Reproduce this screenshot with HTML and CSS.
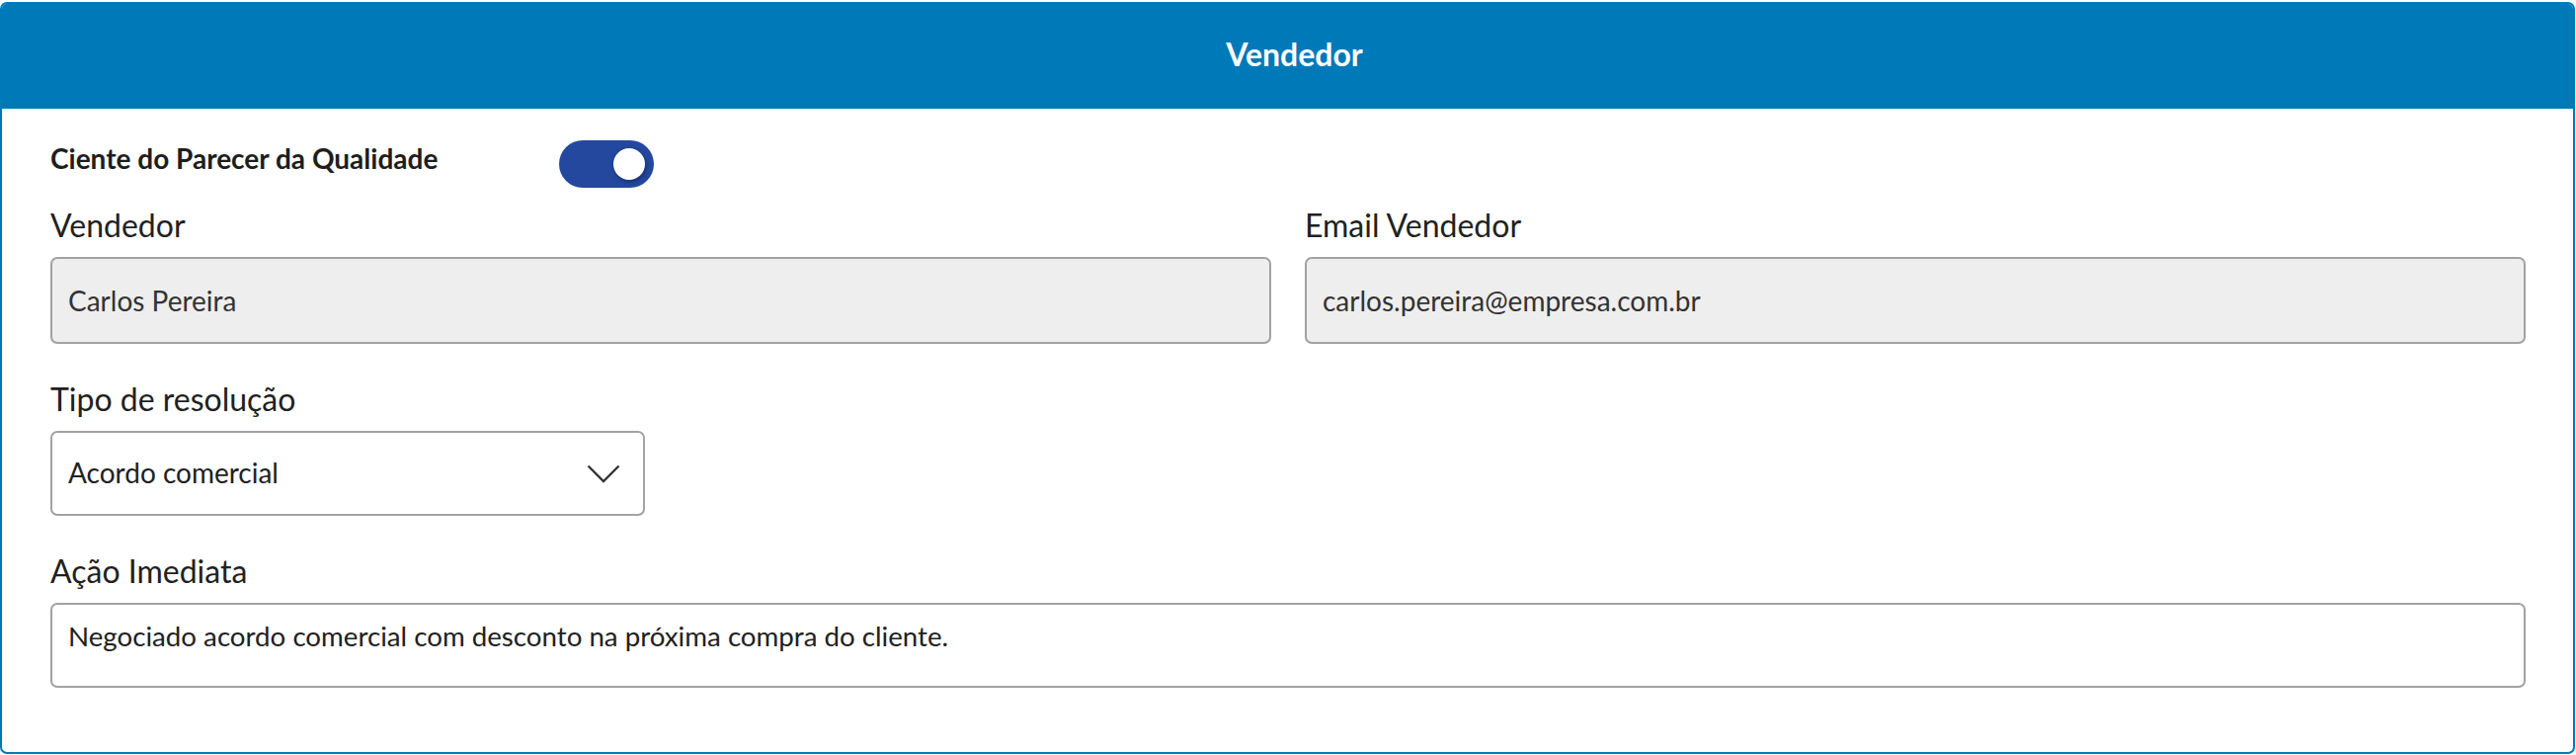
FILE: index.html
```html
<!DOCTYPE html>
<html lang="pt-BR">
<head>
<meta charset="utf-8">
<title>Vendedor</title>
<link rel="stylesheet" href="styles.css">
</head>
<body>
<section class="card">
  <header class="card-header">
    <h1 class="card-title">Vendedor</h1>
  </header>
  <div class="card-body">
    <div class="toggle-row">
      <span class="toggle-label">Ciente do Parecer da Qualidade</span>
      <span class="toggle on" role="switch" aria-checked="true"><span class="knob"></span></span>
    </div>

    <div class="grid-2">
      <div class="field">
        <label class="field-label">Vendedor</label>
        <div class="control readonly">Carlos Pereira</div>
      </div>
      <div class="field">
        <label class="field-label">Email Vendedor</label>
        <div class="control readonly">carlos.pereira@empresa.com.br</div>
      </div>
    </div>

    <div class="field field-select">
      <label class="field-label">Tipo de resolução</label>
      <div class="control select">
        <span class="select-value">Acordo comercial</span>
        <svg class="chevron" width="34" height="19" viewBox="0 0 34 19" aria-hidden="true">
          <path d="M1.5 1.5 L17 17 L32.5 1.5" fill="none" stroke="#333333" stroke-width="2.4" stroke-linejoin="miter"/>
        </svg>
      </div>
    </div>

    <div class="field field-area">
      <label class="field-label">Ação Imediata</label>
      <div class="control textarea">Negociado acordo comercial com desconto na próxima compra do cliente.</div>
    </div>
  </div>
</section>
</body>
</html>
```

FILE: styles.css
```css
* { box-sizing: border-box; }

html, body {
  margin: 0;
  padding: 0;
  background: #ffffff;
}

body {
  padding: 2px 1px 0 0;
  font-family: "Lato", "Open Sans", "Liberation Sans", sans-serif;
  color: #212121;
}

.card {
  border: 2px solid #0079b8;
  border-radius: 7px;
  overflow: hidden;
  height: 761px;
  display: flex;
  flex-direction: column;
}

.card-header {
  background: #0079b8;
  height: 106px;
  display: flex;
  align-items: center;
  justify-content: center;
  padding: 0 0 4px 14px;
}

.card-title {
  margin: 0;
  font-size: 32px;
  font-weight: 700;
  color: #ffffff;
  line-height: 40px;
}

.card-body {
  padding: 31px 48px 0 49px;
  display: flex;
  flex-direction: column;
}

.toggle-row {
  display: flex;
  align-items: flex-start;
  height: 48px;
  margin-top: 1px;
}

.toggle-label {
  flex: 0 0 515px;
  font-size: 28px;
  font-weight: 700;
  line-height: 34px;
  margin-top: 1px;
  color: #1e1e1e;
}

.toggle {
  position: relative;
  width: 96px;
  height: 48px;
  border-radius: 24px;
  background: #23489e;
  display: inline-block;
}

.toggle .knob {
  position: absolute;
  top: 8px;
  right: 9px;
  width: 32px;
  height: 32px;
  border-radius: 50%;
  background: #ffffff;
  box-shadow: 1px 2px 4px rgba(0, 0, 0, 0.35);
}

.grid-2 {
  margin-top: 18px;
  display: grid;
  grid-template-columns: 1fr 1fr;
  column-gap: 34px;
}

.field {
  display: flex;
  flex-direction: column;
}

.field-label {
  display: block;
  font-size: 32px;
  line-height: 40px;
  margin-bottom: 12px;
  color: #212121;
}

.control {
  border: 2px solid #a2a2a2;
  border-radius: 7px;
  font-size: 28px;
  color: #333333;
  padding: 0 16px;
  display: flex;
  align-items: center;
}

.readonly {
  background: #eeeeee;
  height: 88px;
}

.field-select {
  margin-top: 36px;
}

.select {
  width: 602px;
  height: 86px;
  background: #ffffff;
  justify-content: space-between;
  padding-right: 23px;
  color: #212121;
}

.select-value {
  margin-top: -3px;
}

.chevron {
  display: block;
  margin-top: 1px;
}

.field-area {
  margin-top: 36px;
}

.textarea {
  height: 86px;
  background: #ffffff;
  align-items: flex-start;
  padding-top: 14px;
  font-size: 27.7px;
  line-height: 35px;
  color: #212121;
}
```
